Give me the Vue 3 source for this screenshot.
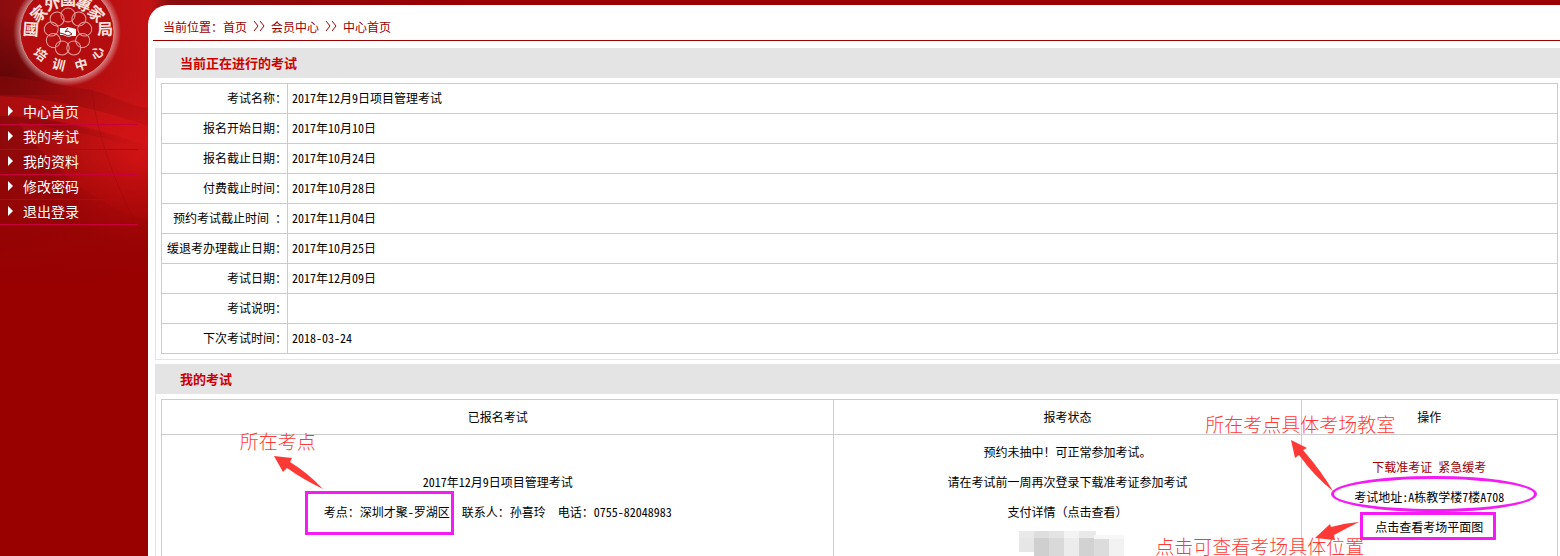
<template>
  <div class="page">
    <aside class="sidebar">
      <svg class="backdrop" width="470" height="290" viewBox="0 0 470 290" aria-hidden="true">
        <defs>
          <linearGradient id="base" x1="0" y1="0" x2="1" y2="0">
            <stop offset="0" stop-color="#8a0c0e" />
            <stop offset="0.15" stop-color="#b00e10" />
            <stop offset="0.32" stop-color="#c41214" />
            <stop offset="0.36" stop-color="#8a0c0e" />
            <stop offset="1" stop-color="#990000" />
          </linearGradient>
          <linearGradient id="fade" x1="0" y1="0" x2="0" y2="1">
            <stop offset="0" stop-color="#990000" stop-opacity="0" />
            <stop offset="0.5" stop-color="#990000" stop-opacity="0.1" />
            <stop offset="0.82" stop-color="#990000" stop-opacity="0.7" />
            <stop offset="1" stop-color="#990000" />
          </linearGradient>
          <linearGradient id="sweep" x1="0" y1="0" x2="1" y2="0">
            <stop offset="0" stop-color="#b00e10" />
            <stop offset="1" stop-color="#d41416" />
          </linearGradient>
          <radialGradient id="glow" cx="138" cy="160" r="90" gradientUnits="userSpaceOnUse">
            <stop offset="0" stop-color="#dc1618" />
            <stop offset="1" stop-color="#dc1618" stop-opacity="0" />
          </radialGradient>
          <radialGradient id="shade" cx="4" cy="80" r="66" gradientUnits="userSpaceOnUse">
            <stop offset="0" stop-color="#5e0507" />
            <stop offset="1" stop-color="#5e0507" stop-opacity="0" />
          </radialGradient>
        </defs>
        <rect width="470" height="290" fill="url(#base)" />
        <rect width="148" height="95" fill="url(#shade)" />
        <path d="M0 76C30 78 60 86 92 90C112 96 130 106 148 108V290H0Z" fill="#8f0a0c" opacity="0.5" />
        <path d="M0 96C48 98 96 108 148 126V146C96 128 48 116 0 116Z" fill="url(#sweep)" opacity="0.85" />
        <path d="M0 116C50 118 100 130 148 150V290H0Z" fill="#900a0c" opacity="0.6" />
        <path d="M18 122C50 128 108 134 148 154V220C100 208 52 170 18 122Z" fill="#b81012" opacity="0.6" />
        <rect y="60" width="148" height="200" fill="url(#glow)" />
        <path d="M92 90C96 130 112 176 134 220" fill="none" stroke="#8f0a0c" opacity="0.4" />
        <rect width="148" height="290" fill="url(#fade)" />
      </svg>
      <svg class="logo" width="134" height="100" viewBox="0 0 134 100" role="img" aria-label="國家外國專家局培训中心">
        <defs>
          <radialGradient id="halo" cx="67" cy="32" r="54" gradientUnits="userSpaceOnUse">
            <stop offset="0.84" stop-color="#fff" stop-opacity="0.55" />
            <stop offset="1" stop-color="#fff" stop-opacity="0" />
          </radialGradient>
        </defs>
        <circle cx="67" cy="32" r="54" fill="url(#halo)" />
        <circle cx="67" cy="32" r="47" fill="#b30d10" stroke="#cf8a86" />
        <circle
          v-for="n in 9"
          :key="n"
          cx="68"
          cy="15"
          r="7"
          fill="none"
          stroke="#e3a59d"
          :transform="`rotate(${n * 40} 68 32)`"
        />
        <path d="M60 28H65L68 27L76 29V36H72L68 37L63 35H60Z" fill="#fff" />
        <path d="M60 33L64 34L68 36L72 34L68 31L65 32L68 28" fill="none" stroke="#8f1a1a" />
        <text
          v-for="c in sealChars"
          :key="c.x"
          class="seal-char"
          :x="c.x"
          :y="c.y"
          :font-size="c.size"
          :transform="`rotate(${c.turn} ${c.x} ${c.y})`"
        >{{ c.text }}</text>
      </svg>
      <nav class="menu">
        <a v-for="item in menu" :key="item" href="#">
          <svg width="5" height="10" viewBox="0 0 5 10" aria-hidden="true">
            <path d="M0 0L5 5L0 10Z" fill="#fff" />
          </svg>
          {{ item }}
        </a>
      </nav>
    </aside>

    <main class="main">
      <div class="crumbs">
        当前位置：<a href="#">首页</a>
        <svg width="12" height="10" viewBox="0 0 12 10" aria-label="&gt;&gt;"><path d="M1 0L5 5L1 10M7 0L11 5L7 10" /></svg>
        <a href="#">会员中心</a>
        <svg width="12" height="10" viewBox="0 0 12 10" aria-label="&gt;&gt;"><path d="M1 0L5 5L1 10M7 0L11 5L7 10" /></svg>
        <a href="#">中心首页</a>
      </div>

      <section class="panel">
        <h2>当前正在进行的考试</h2>
        <div class="panel-body">
          <table class="info">
            <tbody>
              <tr v-for="row in examInfo" :key="row.label">
                <th scope="row">{{ row.label }}</th>
                <td>{{ row.value }}</td>
              </tr>
            </tbody>
          </table>
        </div>
      </section>

      <section class="panel">
        <h2>我的考试</h2>
        <div class="panel-body">
          <table class="mine">
            <thead>
              <tr>
                <th class="col-exam" scope="col">已报名考试</th>
                <th class="col-status" scope="col">报考状态</th>
                <th scope="col">操作</th>
              </tr>
            </thead>
            <tbody>
              <tr>
                <td>
                  <p>2017年12月9日项目管理考试</p>
                  <p>
                    <span class="marked">
                      考点：深圳才聚-罗湖区
                      <span class="frame frame-site"></span>
                      <svg class="arrow arrow-site" width="50" height="34" viewBox="0 0 50 34" aria-hidden="true">
                        <path d="M0 0L18 2L16 6Q34 17 49 33Q30 24 13 12L9 16Z" />
                      </svg>
                      <span class="note note-site">所在考点</span>
                    </span>&nbsp;&nbsp;联系人：孙喜玲&nbsp;&nbsp;电话：0755-82048983
                  </p>
                </td>
                <td>
                  <p>预约未抽中！可正常参加考试。</p>
                  <p>请在考试前一周再次登录下载准考证参加考试</p>
                  <p><a href="#">支付详情（点击查看）</a></p>
                  <p class="masked">
                    <svg width="106" height="26" viewBox="0 0 106 26" aria-hidden="true">
                      <rect v-for="b in blocks" :key="b.x + '-' + b.y" :x="b.x" :y="b.y" :width="b.w" :height="b.h" :fill="b.fill" />
                    </svg>
                  </p>
                </td>
                <td>
                  <p><a class="red" href="#">下载准考证</a>&nbsp;<a class="red" href="#">紧急缓考</a></p>
                  <p>
                    <span class="marked">
                      考试地址:A栋教学楼7楼A708
                      <span class="frame frame-room"></span>
                      <svg class="arrow arrow-room" width="44" height="52" viewBox="0 0 44 52" aria-hidden="true">
                        <path d="M0 0L16 8L12 10Q31 32 42 51Q24 37 8 15L4 18Z" />
                      </svg>
                      <span class="note note-room">所在考点具体考场教室</span>
                    </span>
                  </p>
                  <p>
                    <span class="marked">
                      <a href="#">点击查看考场平面图</a>
                      <span class="frame frame-map"></span>
                      <svg class="arrow arrow-map" width="46" height="20" viewBox="0 0 46 20" aria-hidden="true">
                        <path d="M0 16L15 2L16 5Q30 1 44 0Q32 6 19 13L20 18Z" />
                      </svg>
                      <span class="note note-map">点击可查看考场具体位置</span>
                    </span>
                  </p>
                </td>
              </tr>
            </tbody>
          </table>
        </div>
      </section>
    </main>
  </div>
</template>

<script setup>
const menu = ['中心首页', '我的考试', '我的资料', '修改密码', '退出登录']

const examInfo = [
  { label: '考试名称：', value: '2017年12月9日项目管理考试' },
  { label: '报名开始日期：', value: '2017年10月10日' },
  { label: '报名截止日期：', value: '2017年10月24日' },
  { label: '付费截止时间：', value: '2017年10月28日' },
  { label: '预约考试截止时间 ：', value: '2017年11月04日' },
  { label: '缓退考办理截止日期：', value: '2017年10月25日' },
  { label: '考试日期：', value: '2017年12月09日' },
  { label: '考试说明：', value: '' },
  { label: '下次考试时间：', value: '2018-03-24' }
]

const sealChars = [
  { text: '國', x: 31, y: 28, turn: 4, size: 16 },
  { text: '家', x: 38, y: 13, turn: -42, size: 16 },
  { text: '外', x: 52, y: 2, turn: -22, size: 16 },
  { text: '國', x: 68, y: -2, turn: 0, size: 16 },
  { text: '專', x: 84, y: 3, turn: 22, size: 16 },
  { text: '家', x: 97, y: 13, turn: 44, size: 16 },
  { text: '局', x: 105, y: 28, turn: -2, size: 16 },
  { text: '培', x: 41, y: 54, turn: 36, size: 13 },
  { text: '训', x: 59, y: 64, turn: 14, size: 13 },
  { text: '中', x: 81, y: 64, turn: -16, size: 13 },
  { text: '心', x: 97, y: 52, turn: -40, size: 13 }
]

// mosaic over the hidden payment number
const blocks = [
  { x: 0, y: 1, w: 15, h: 12, fill: '#e9e9e9' },
  { x: 15, y: 1, w: 15, h: 7, fill: '#dedede' },
  { x: 30, y: 1, w: 15, h: 7, fill: '#e4e4e4' },
  { x: 45, y: 1, w: 15, h: 7, fill: '#f4f4f4' },
  { x: 60, y: 1, w: 17, h: 7, fill: '#e9e9e9' },
  { x: 75, y: 5, w: 30, h: 4, fill: '#f7f7f7' },
  { x: 0, y: 8, w: 15, h: 14, fill: '#e6e6e6' },
  { x: 15, y: 8, w: 15, h: 18, fill: '#cfcfcf' },
  { x: 30, y: 8, w: 15, h: 18, fill: '#d9d9d9' },
  { x: 45, y: 8, w: 15, h: 18, fill: '#ececec' },
  { x: 60, y: 8, w: 15, h: 18, fill: '#d2d2d2' },
  { x: 75, y: 9, w: 15, h: 17, fill: '#dcdcdc' },
  { x: 90, y: 9, w: 15, h: 17, fill: '#f2f2f2' }
]
</script>

<style>
body {
  margin: 0;
  background: #900;
}
</style>

<style scoped>
.page {
  display: flex;
  height: 100vh;
  overflow: hidden;
  position: relative;
  font-family: 'Noto Sans Mono CJK SC', 'Liberation Serif', 'Noto Sans CJK SC', sans-serif;
  font-size: 12px;
  color: #000;
  background: #900;
}
a {
  color: inherit;
  text-decoration: none;
}
.sidebar {
  flex: 0 0 148px;
}
.backdrop {
  position: absolute;
  top: 0;
  left: 0;
}
.logo {
  display: block;
  position: relative;
}
.seal-char {
  fill: #fbe3df;
  font-weight: bold;
  text-anchor: middle;
  dominant-baseline: central;
}
.menu {
  position: relative;
  margin-right: 10px;
}
.menu a {
  display: flex;
  align-items: center;
  gap: 10px;
  height: 22px;
  padding: 0 0 2px 8px;
  border-bottom: 1px solid #c8003c;
  color: #fff;
  font-size: 14px;
}
.menu a:nth-child(even) {
  border-bottom-color: #b00528;
}
.main {
  flex: 1;
  min-width: 0;
  position: relative;
  margin-top: 5px;
  background: #fff;
  border-top-left-radius: 20px;
}
.crumbs {
  display: flex;
  align-items: center;
  gap: 6px;
  margin: 0 0 7px 5px;
  padding: 8px 0 1px 10px;
  height: 26px;
  border-bottom: 1px solid #900;
  color: #900;
}
.crumbs > a:first-of-type {
  margin-left: -6px;
}
.crumbs path {
  fill: none;
  stroke: #900;
}
.panel {
  margin: 0 0 4px 7px;
  border: solid #e4e4e4;
  border-width: 0 0 1px 1px;
}
h2 {
  margin: 0;
  padding-left: 24px;
  line-height: 30px;
  font-size: 13px;
  color: #c00;
  background: #e4e4e4;
}
.panel-body {
  padding: 5px 2px 5px 5px;
}
table {
  width: 100%;
  table-layout: fixed;
  border-collapse: collapse;
}
th,
td {
  border: 1px solid #ccc;
  font-weight: normal;
}
.info th,
.info td {
  padding: 0 0 2px;
  height: 27px;
  line-height: 20px;
}
.info th {
  width: 125px;
  text-align: right;
  white-space: nowrap;
}
.info td {
  padding-left: 4px;
}
.mine th {
  padding: 0 0 2px;
  height: 32px;
}
.mine td {
  padding: 2px 0;
  text-align: center;
}
.col-exam {
  width: 48.1%;
}
.col-status {
  width: 33.4%;
}
p {
  margin: 0;
  line-height: 30px;
}
.red {
  color: #900;
}
.masked {
  height: 30px;
}
.masked svg {
  display: block;
  margin: 0 auto;
  padding: 3px 0 0 8px;
}
/* hand-drawn hints lying over the table */
.marked {
  display: inline-block;
  position: relative;
}
.frame,
.arrow,
.note {
  position: absolute;
  pointer-events: none;
}
.frame {
  box-sizing: border-box;
  border: 3px solid #f51bf5;
}
.arrow path {
  fill: #ff3a36;
}
.note {
  font-family: 'Noto Sans CJK SC Light', 'Noto Sans CJK SC', sans-serif;
  font-size: 19px;
  font-weight: 300;
  line-height: 24px;
  color: #ff3a36;
  white-space: nowrap;
}
.frame-site {
  top: -6px;
  left: -19px;
  width: 149px;
  height: 44px;
}
.arrow-site {
  top: -41px;
  left: -50px;
}
.note-site {
  top: -68px;
  left: -84px;
}
.frame-room {
  top: -6px;
  left: -23px;
  width: 206px;
  height: 36px;
  border-radius: 50%;
}
.arrow-room {
  top: -42px;
  left: -63px;
}
.note-room {
  top: -70px;
  left: -149px;
}
.frame-map {
  top: 0;
  left: -15px;
  width: 136px;
  height: 28px;
}
.arrow-map {
  top: 10px;
  left: -60px;
}
.note-map {
  top: 22px;
  left: -220px;
}
</style>
